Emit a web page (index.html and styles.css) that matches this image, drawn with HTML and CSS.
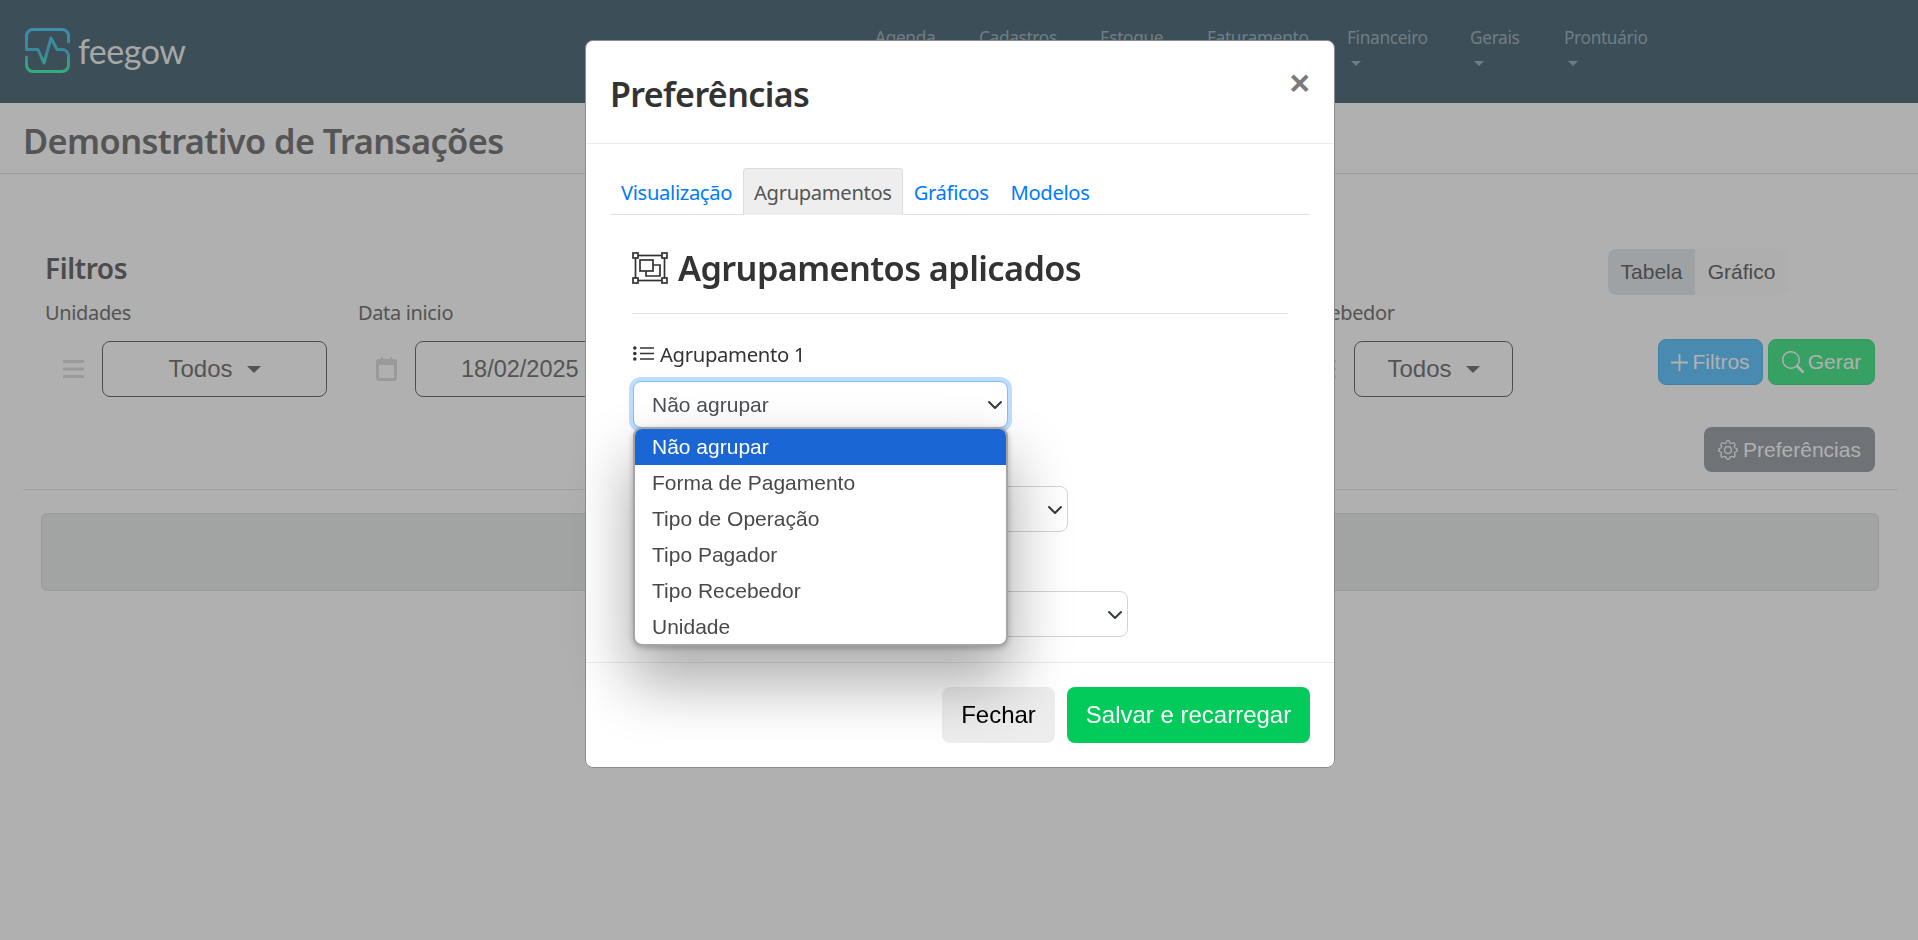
FILE: index.html
```html
<!DOCTYPE html>
<html lang="pt-BR">
<head>
<meta charset="utf-8">
<title>Demonstrativo de Transações</title>
<link rel="stylesheet" href="styles.css">
</head>
<body>
<header class="navbar">
  <a class="brand">
    <svg class="brand-mark" viewBox="0 0 45 45" width="45" height="45" fill="none">
      <defs><linearGradient id="lg" x1="0" y1="0" x2="0" y2="1"><stop offset="0" stop-color="#56ceff"/><stop offset=".55" stop-color="#55c4e0"/><stop offset="1" stop-color="#4ffaaf"/></linearGradient></defs>
      <path d="M43.5 14V8a6.5 6.5 0 0 0-6.500-6.500H8A6.500 6.500 0 0 0 1.500 8v13.500H13L19 35l7-25 6 11.500H37a6.500 6.500 0 0 1 6.500 6.500V37a6.500 6.500 0 0 1-6.500 6.500H8A6.500 6.500 0 0 1 1.500 37v-8" stroke="url(#lg)" stroke-width="3" stroke-linecap="round" stroke-linejoin="round"/>
    </svg>
    <span class="brand-name">feegow</span>
  </a>
  <nav class="nav-links">
    <a class="nav-item nav-agenda"><span>Agenda</span><i class="caret"></i></a>
    <a class="nav-item nav-cadastros"><span>Cadastros</span><i class="caret"></i></a>
    <a class="nav-item nav-estoque"><span>Estoque</span><i class="caret"></i></a>
    <a class="nav-item nav-faturamento"><span>Faturamento</span><i class="caret"></i></a>
    <a class="nav-item nav-financeiro"><span>Financeiro</span><i class="caret"></i></a>
    <a class="nav-item nav-gerais"><span>Gerais</span><i class="caret"></i></a>
    <a class="nav-item"><span>Prontuário</span><i class="caret"></i></a>
  </nav>
</header>

<div class="title-bar"><h1>Demonstrativo de Transações</h1></div>

<main class="report">
  <section class="filters">
    <div class="filters-left">
      <h3>Filtros</h3>
      <div class="filter-grid">
        <div class="field">
          <label>Unidades</label>
          <div class="field-row">
            <svg class="field-icon" viewBox="0 0 21 18" width="21" height="18"><path d="M0 0h21v3H0zM0 7.500h21v3H0zM0 15h21v3H0z" fill="#e0e0e0"/></svg>
            <button class="pick">Todos<i class="pick-caret"></i></button>
          </div>
        </div>
        <div class="field">
          <label>Data inicio</label>
          <div class="field-row">
            <svg class="field-icon" viewBox="0 0 21 24" width="21" height="24"><path d="M5 0h2v4H5zM14 0h2v4h-2z" fill="#e0e0e0"/><rect x="1.500" y="3.500" width="18" height="19" rx="1.500" fill="none" stroke="#e0e0e0" stroke-width="3"/><path d="M0 3h21v5H0z" fill="#e0e0e0"/></svg>
            <button class="pick pick-date">18/02/2025</button>
          </div>
        </div>
        <div class="field">
          <label>Data fim</label>
          <div class="field-row">
            <svg class="field-icon" viewBox="0 0 21 24" width="21" height="24"><path d="M5 0h2v4H5zM14 0h2v4h-2z" fill="#e0e0e0"/><rect x="1.500" y="3.500" width="18" height="19" rx="1.500" fill="none" stroke="#e0e0e0" stroke-width="3"/><path d="M0 3h21v5H0z" fill="#e0e0e0"/></svg>
            <button class="pick pick-date">18/03/2025</button>
          </div>
        </div>
        <div class="field">
          <label>Pagador</label>
          <div class="field-row">
            <svg class="field-icon" viewBox="0 0 21 18" width="21" height="18"><path d="M0 0h21v3H0zM0 7.500h21v3H0zM0 15h21v3H0z" fill="#e0e0e0"/></svg>
            <button class="pick">Todos<i class="pick-caret"></i></button>
          </div>
        </div>
        <div class="field">
          <label>Recebedor</label>
          <div class="field-row">
            <svg class="field-icon" viewBox="0 0 21 18" width="21" height="18"><path d="M0 0h21v3H0zM0 7.500h21v3H0zM0 15h21v3H0z" fill="#e0e0e0"/></svg>
            <button class="pick pick-short">Todos<i class="pick-caret"></i></button>
          </div>
        </div>
      </div>
    </div>
    <div class="filters-right">
      <div class="view-toggle">
        <button class="toggle toggle-on">Tabela</button>
        <button class="toggle">Gráfico</button>
      </div>
      <div class="actions">
        <button class="btn btn-blue">
          <svg viewBox="0 0 17 17" width="17" height="17"><path d="M8.500 0v17M0 8.500h17" stroke="currentColor" stroke-width="1.800" fill="none"/></svg>Filtros
        </button>
        <button class="btn btn-green">
          <svg viewBox="0 0 16 16" width="22" height="22" fill="currentColor"><path d="M11.742 10.344a6.500 6.500 0 1 0-1.397 1.398h-.001c.03.04.062.078.098.115l3.850 3.850a1 1 0 0 0 1.415-1.414l-3.850-3.850a1.007 1.007 0 0 0-.115-.1zM12 6.500a5.500 5.500 0 1 1-11 0 5.500 5.500 0 0 1 11 0z"/></svg>Gerar
        </button>
      </div>
    </div>
  </section>
  <div class="prefs-row">
    <button class="btn btn-gray">
      <svg viewBox="0 0 16 16" width="20" height="20" fill="currentColor"><path d="M8 4.754a3.246 3.246 0 1 0 0 6.492 3.246 3.246 0 0 0 0-6.492zM5.754 8a2.246 2.246 0 1 1 4.492 0 2.246 2.246 0 0 1-4.492 0z"/><path d="M9.796 1.343c-.527-1.790-3.065-1.790-3.592 0l-.094.319a.873.873 0 0 1-1.255.52l-.292-.16c-1.640-.892-3.433.902-2.540 2.541l.159.292a.873.873 0 0 1-.52 1.255l-.319.094c-1.790.527-1.790 3.065 0 3.592l.319.094a.873.873 0 0 1 .52 1.255l-.16.292c-.892 1.640.901 3.434 2.541 2.540l.292-.159a.873.873 0 0 1 1.255.52l.094.319c.527 1.790 3.065 1.790 3.592 0l.094-.319a.873.873 0 0 1 1.255-.52l.292.16c1.640.893 3.434-.902 2.540-2.541l-.159-.292a.873.873 0 0 1 .52-1.255l.319-.094c1.790-.527 1.790-3.065 0-3.592l-.319-.094a.873.873 0 0 1-.52-1.255l.16-.292c.893-1.640-.902-3.433-2.541-2.540l-.292.159a.873.873 0 0 1-1.255-.52l-.094-.319zm-2.633.283c.246-.835 1.428-.835 1.674 0l.094.319a1.873 1.873 0 0 0 2.693 1.115l.291-.16c.764-.415 1.600.42 1.184 1.185l-.159.292a1.873 1.873 0 0 0 1.116 2.692l.318.094c.835.246.835 1.428 0 1.674l-.319.094a1.873 1.873 0 0 0-1.115 2.693l.16.291c.415.764-.42 1.600-1.185 1.184l-.291-.159a1.873 1.873 0 0 0-2.693 1.116l-.094.318c-.246.835-1.428.835-1.674 0l-.094-.319a1.873 1.873 0 0 0-2.692-1.115l-.292.16c-.764.415-1.600-.42-1.184-1.185l.159-.291A1.873 1.873 0 0 0 1.945 8.930l-.319-.094c-.835-.246-.835-1.428 0-1.674l.319-.094A1.873 1.873 0 0 0 3.060 4.377l-.16-.292c-.415-.764.42-1.600 1.185-1.184l.292.159a1.873 1.873 0 0 0 2.692-1.115l.094-.319z"/></svg>Preferências
    </button>
  </div>
  <hr class="report-rule">
  <div class="notice"></div>
</main>

<div class="backdrop"></div>

<div class="modal" role="dialog">
  <div class="modal-header">
    <h2>Preferências</h2>
    <button class="close">×</button>
  </div>
  <div class="modal-body">
    <ul class="tabs">
      <li class="tab">Visualização</li>
      <li class="tab tab-active">Agrupamentos</li>
      <li class="tab">Gráficos</li>
      <li class="tab">Modelos</li>
    </ul>
    <div class="pane">
      <h3 class="pane-title">
        <svg viewBox="0 0 36 32" width="36" height="32" fill="none" stroke="#333" stroke-width="1.700">
          <rect x="3.500" y="3.500" width="29" height="25"/>
          <rect x="1" y="1" width="5" height="5" fill="#fff"/><rect x="30" y="1" width="5" height="5" fill="#fff"/>
          <rect x="1" y="26" width="5" height="5" fill="#fff"/><rect x="30" y="26" width="5" height="5" fill="#fff"/>
          <rect x="8" y="8" width="13" height="11"/>
          <path d="M21 13h7v11H14v-5"/>
        </svg>
        Agrupamentos aplicados
      </h3>
      <div class="group">
        <div class="group-label">
          <svg viewBox="0 0 21 15" width="21" height="15"><path d="M7 2h14M7 7.500h14M7 13h14" stroke="#333" stroke-width="1.400"/><circle cx="1.800" cy="2" r="1.800" fill="#333"/><circle cx="1.800" cy="7.500" r="1.800" fill="#333"/><circle cx="1.800" cy="13" r="1.800" fill="#333"/></svg>
          Agrupamento 1
        </div>
        <div class="select select-focus select-1">
          <span>Não agrupar</span>
          <svg viewBox="0 0 16 16" width="16" height="16"><path d="M2 5l6 6 6-6" fill="none" stroke="#343a40" stroke-width="2" stroke-linecap="round" stroke-linejoin="round"/></svg>
        </div>
        <ul class="options">
          <li class="option option-on">Não agrupar</li>
          <li class="option">Forma de Pagamento</li>
          <li class="option">Tipo de Operação</li>
          <li class="option">Tipo Pagador</li>
          <li class="option">Tipo Recebedor</li>
          <li class="option">Unidade</li>
        </ul>
      </div>
      <div class="group">
        <div class="group-label">Agrupamento 2</div>
        <div class="select select-2">
          <span>Não agrupar</span>
          <svg viewBox="0 0 16 16" width="16" height="16"><path d="M2 5l6 6 6-6" fill="none" stroke="#343a40" stroke-width="2" stroke-linecap="round" stroke-linejoin="round"/></svg>
        </div>
      </div>
      <div class="group">
        <div class="group-label">Agrupamento 3</div>
        <div class="select select-3">
          <span>Não agrupar</span>
          <svg viewBox="0 0 16 16" width="16" height="16"><path d="M2 5l6 6 6-6" fill="none" stroke="#343a40" stroke-width="2" stroke-linecap="round" stroke-linejoin="round"/></svg>
        </div>
      </div>
    </div>
  </div>
  <div class="modal-footer">
    <button class="mbtn mbtn-light">Fechar</button>
    <button class="mbtn mbtn-green">Salvar e recarregar</button>
  </div>
</div>
</body>
</html>
```
FILE: styles.css
```css
* { box-sizing: border-box; }
html, body { margin: 0; height: 940px; overflow: hidden; }
body { background: #fff; color: #6e6e6e; font-family: "Noto Sans", sans-serif; }
button { font-family: "Liberation Sans", Arial, sans-serif; cursor: default; }
ul { list-style: none; margin: 0; padding: 0; }

/* top bar */
.navbar { height: 103px; background: #57717e; display: flex; align-items: flex-start; }
.brand { display: flex; align-items: flex-start; margin: 28px 0 0 25px; width: 850px; flex: none; }
.brand-name { margin: 0 0 0 8px; font: 400 34px/40px Lato, sans-serif; color: #f2f2f2; letter-spacing: -.5px; position: relative; top: 3px; }
.nav-links { display: flex; gap: 42px; padding-top: 25px; font-size: 17.300px; line-height: 26px; color: #a2b6c0; letter-spacing: -.35px; }
.nav-item { display: flex; flex-direction: column; align-items: flex-start; }
.caret { display: block; margin: 10px 0 0 4px; width: 0; height: 0; border: 5px solid transparent; border-top-color: #a2b6c0; border-bottom: 0; }
.nav-agenda { width: 62px; }
.nav-cadastros { width: 79px; }
.nav-estoque { width: 65px; }
.nav-faturamento { width: 98px; }
.nav-financeiro { width: 81px; }
.nav-gerais { width: 52px; }

.title-bar { height: 71px; border-bottom: 1px solid #e2e2e2; padding: 16px 0 0 23px; }
.title-bar h1 { margin: 0; font-size: 34.400px; line-height: 44px; font-weight: 600; color: #7c7c7c; letter-spacing: -.6px; }

/* report */
.report { display: flex; flex-direction: column; }
.filters { display: flex; justify-content: space-between; padding: 75px 43px 0 45px; }
.filters-left h3 { margin: 0; font-size: 28px; line-height: 38px; font-weight: 600; color: #6f6f6f; letter-spacing: -.4px; }
.filter-grid { display: grid; grid-template-columns: repeat(4, 313px) 250px; margin-top: 14px; }
.field label { display: block; font-size: 20px; line-height: 24px; color: #7a7a7a; letter-spacing: -.35px; }
.field-row { display: flex; align-items: center; gap: 18px; margin-top: 16px; padding-left: 18px; height: 56px; }
.field-icon { flex: none; }
.pick { width: 225px; height: 56px; border: 1px solid #727272; border-radius: 8px; background: transparent; color: #7a7a7a; font-size: 24px; display: flex; align-items: center; justify-content: center; gap: 14px; padding: 0; }
.pick-date { justify-content: flex-start; padding-left: 45px; font-size: 23.500px; }
.pick-short { width: 159px; }
.pick-caret { width: 0; height: 0; border: 7px solid transparent; border-top-color: #7a7a7a; border-bottom: 0; }

.filters-right { display: flex; flex-direction: column; align-items: flex-end; }
.view-toggle { display: flex; margin-right: 87px; height: 46px; }
.toggle { border: 0; padding: 0; width: 93px; font-size: 21px; background: #fcfcfc; color: #6c6c6c; border-radius: 0 8px 8px 0; }
.toggle-on { width: 87px; background: #e6ebee; border-radius: 8px 0 0 8px; }
.actions { display: flex; gap: 5px; margin-top: 44px; }
.btn { height: 46px; border: 1px solid transparent; border-radius: 8px; color: #fff; font-size: 21px; display: flex; align-items: center; justify-content: center; gap: 4px; padding: 0; }
.btn-blue { width: 105px; background: #6bc9ff; border-color: #62bcf0; }
.btn-green { width: 107px; background: #50e991; border-color: #4ddc8a; }
.btn-gray { width: 171px; height: 45px; background: #a1a5ad; gap: 5px; }
.prefs-row { display: flex; justify-content: flex-end; padding-right: 43px; margin-top: 30px; }
.report-rule { margin: 17px 20px 0 23px; border: 0; border-top: 1px solid #eaeaea; }
.notice { margin: 23px 39px 0 41px; height: 78px; border: 1px solid #e0e2e1; border-radius: 6px; background: #ebeeec; }

.backdrop { position: fixed; inset: 0; background: rgba(0,0,0,.31); }

/* dialog */
.modal { position: fixed; top: 40px; left: 585px; width: 750px; height: 728px; background: #fff; border: 1px solid #8d8d8d; border-radius: 8px; display: flex; flex-direction: column; color: #333; }
.modal-header { height: 103px; flex: none; border-bottom: 1px solid #e9ecef; padding: 31px 24px 0; display: flex; justify-content: space-between; }
.modal-header h2 { margin: 0; font-size: 34px; line-height: 44px; font-weight: 600; color: #333; letter-spacing: -.6px; }
.close { border: 0; background: none; padding: 0; color: #7a7a7a; font-size: 35px; line-height: 38px; font-weight: 700; height: 38px; margin-top: -8px; }
.modal-body { flex: 1; padding: 24px 24px 0; }
.tabs { display: flex; height: 47px; border-bottom: 1px solid #dee2e6; font-size: 20.200px; line-height: 27px; color: #007bff; letter-spacing: -.35px; }
.tab { padding: 10px 10px 0; height: 47px; border: 1px solid transparent; border-bottom: 0; }
.tab-active { color: #555; background: #eee; border: 1px solid #ddd; border-bottom: 0; border-radius: 4px 4px 0 0; }
.pane { padding: 0 22px 0 23px; }
.pane-title { margin: 0 0 0 -1px; padding: 37px 0 0; height: 99px; border-bottom: 1px solid #e4e4e4; font-size: 34.300px; line-height: 32px; font-weight: 600; letter-spacing: -.6px; color: #333; display: flex; align-items: flex-start; gap: 10px; }
.group { position: relative; height: 105px; }
.group-label { display: flex; align-items: center; gap: 6px; height: 67px; padding-top: 12px; font-size: 20.300px; color: #333; letter-spacing: -.35px; }
.select { display: flex; align-items: center; justify-content: space-between; height: 46px; padding: 1px 4px 0 18px; border: 1px solid #ced4da; border-radius: 8px; background: #fff; color: #495057; font: 21px "Liberation Sans", Arial, sans-serif; }
.select-focus { height: 47px; border-color: #80bdff; box-shadow: 0 0 0 4px #bfdeff; }
.select-1 { width: 375px; }
.select-2 { width: 435px; }
.select-3 { width: 495px; }
.options { position: absolute; z-index: 2; top: 113px; left: 0; width: 375px; height: 219px; background: #fff; border: 2px solid #a5a5a5; border-radius: 9px; overflow: hidden; font: 21px/36px "Liberation Sans", Arial, sans-serif; color: #494949; box-shadow: 0 2px 6px rgba(0,0,0,.25), 0 34px 60px 4px rgba(0,0,0,.32); }
.option { padding-left: 17px; height: 36px; }
.option-on { background: #1a66d4; color: #fff; }
.modal-footer { height: 105px; flex: none; border-top: 1px solid #e9ecef; padding: 24px 24px 0 0; display: flex; justify-content: flex-end; gap: 12px; }
.mbtn { height: 56px; border: 0; border-radius: 8px; font-size: 24px; padding: 0; }
.mbtn-light { width: 113px; background: #ededed; color: #000; }
.mbtn-green { width: 243px; background: #02ca5b; color: #fff; }
```
